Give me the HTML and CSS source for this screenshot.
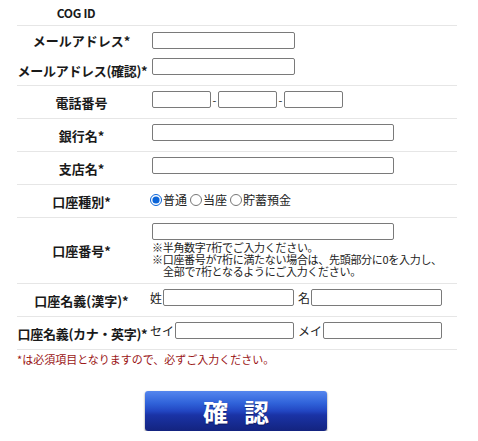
FILE: index.html
```html
<!DOCTYPE html>
<html lang="ja">
<head>
<meta charset="utf-8">
<title>登録フォーム</title>
<link rel="stylesheet" href="styles.css">
</head>
<body>
<form class="form">
  <div class="row r-cog">
    <div class="label label-id">COG ID</div>
    <div class="field"></div>
  </div>
  <div class="row r-mail">
    <div class="label">メールアドレス*</div>
    <div class="field pad"><input type="text" class="in w-mail"></div>
  </div>
  <div class="row r-mail2">
    <div class="label tight">メールアドレス(確認)*</div>
    <div class="field pad lift"><input type="text" class="in w-mail"></div>
  </div>
  <div class="row r-std">
    <div class="label">電話番号</div>
    <div class="field pad lift">
      <input type="text" class="in w-tel"><span class="dash">-</span><input type="text" class="in w-tel"><span class="dash">-</span><input type="text" class="in w-tel">
    </div>
  </div>
  <div class="row r-std">
    <div class="label">銀行名*</div>
    <div class="field pad lift"><input type="text" class="in w-long"></div>
  </div>
  <div class="row r-std">
    <div class="label">支店名*</div>
    <div class="field pad lift"><input type="text" class="in w-long"></div>
  </div>
  <div class="row r-std">
    <div class="label">口座種別*</div>
    <div class="field radios">
      <label class="opt"><input type="radio" name="kind" checked>普通</label>
      <label class="opt"><input type="radio" name="kind">当座</label>
      <label class="opt"><input type="radio" name="kind">貯蓄預金</label>
    </div>
  </div>
  <div class="row r-acct">
    <div class="label">口座番号*</div>
    <div class="field pad stack">
      <input type="text" class="in w-long">
      <div class="notes">
        <div>※半角数字7桁でご入力ください。</div>
        <div>※口座番号が7桁に満たない場合は、先頭部分に0を入力し、</div>
        <div class="indent">全部で7桁となるようにご入力ください。</div>
      </div>
    </div>
  </div>
  <div class="row r-std">
    <div class="label">口座名義(漢字)*</div>
    <div class="field lift names">
      <span class="pre">姓</span><input type="text" class="in w-kanji"><span class="pre gap">名</span><input type="text" class="in w-kanji">
    </div>
  </div>
  <div class="row r-std">
    <div class="label tight">口座名義(カナ・英字)*</div>
    <div class="field lift names">
      <span class="pre">セイ</span><input type="text" class="in w-kana"><span class="pre gap">メイ</span><input type="text" class="in w-kana">
    </div>
  </div>
  <p class="note">*は必須項目となりますので、必ずご入力ください。</p>
  <div class="actions">
    <button type="button" class="confirm"><span>確</span><span>認</span></button>
  </div>
</form>
</body>
</html>
```
FILE: styles.css
```css
html, body {
  margin: 0;
  padding: 0;
  background: #ffffff;
}
body {
  font-family: "Noto Sans CJK JP", "Liberation Sans", sans-serif;
  color: #222222;
  font-size: 12px;
}
.form {
  margin: 0 0 0 17px;
  width: 440px;
}
.row {
  display: flex;
  border-bottom: 1px solid #e6e6e6;
}
.r-cog { height: 25px; }
.r-mail { height: 29px; border-bottom: none; }
.r-mail2 { height: 30px; }
.r-std { height: 32px; }
.r-acct { height: 65px; }
.label {
  width: 133px;
  flex: none;
  box-sizing: border-box;
  padding-right: 4px;
  display: flex;
  align-items: center;
  justify-content: center;
  font-weight: bold;
  font-size: 13px;
  line-height: 15px;
  white-space: nowrap;
  color: #1a1a1a;
}
.tight {
  letter-spacing: -0.3px;
  padding-right: 2px;
}
.label-id {
  font-size: 12px;
  letter-spacing: -0.3px;
  padding-right: 15px;
}
.field {
  flex: 1;
  display: flex;
  align-items: center;
  padding-left: 0;
  font-size: 12px;
  line-height: 14px;
}
.pad { padding-left: 2px; }
.lift { padding-bottom: 5px; box-sizing: border-box; }
.r-mail2 .lift { padding-bottom: 7px; }
.in {
  box-sizing: border-box;
  height: 17px;
  margin: 0;
  padding: 0 2px;
  border: 1px solid #7a7a7a;
  border-radius: 2px;
  background: #ffffff;
  font-size: 12px;
}
.w-mail { width: 143px; }
.w-tel { width: 59px; }
.w-long { width: 242px; }
.w-kanji { width: 131px; }
.w-kana { width: 119px; }
.dash {
  width: 7px;
  text-align: center;
  font-size: 11px;
  line-height: 14px;
}
.radios { gap: 3px; padding-bottom: 2px; box-sizing: border-box; }
.opt {
  display: flex;
  align-items: center;
  white-space: nowrap;
}
.opt input {
  width: 12px;
  height: 12px;
  margin: 0 1px 0 0;
  accent-color: #0a64d8;
}
.stack {
  flex-direction: column;
  align-items: flex-start;
  justify-content: center;
  padding-bottom: 2px;
  box-sizing: border-box;
}
.notes {
  font-size: 11px;
  line-height: 12px;
  letter-spacing: -0.3px;
  margin-top: 1px;
  white-space: nowrap;
}
.indent { padding-left: 11px; }
.names .pre {
  font-size: 12px;
  line-height: 14px;
  white-space: nowrap;
}
.names .pre + .in { margin-left: 1px; }
.names .gap { margin-left: 4px; }
.note {
  margin: 0;
  padding-top: 2px;
  font-size: 11px;
  line-height: 14px;
  color: #9a1414;
  white-space: nowrap;
}
.actions {
  display: flex;
  justify-content: center;
  margin-top: 25px;
}
.confirm {
  width: 182px;
  height: 40px;
  margin: 0 0 0 -2px;
  padding: 0;
  border: none;
  border-radius: 3px;
  background: linear-gradient(#5586ee 0%, #3063da 30%, #2246c2 50%, #1a33a6 60%, #13237f 100%);
  box-shadow: 0 1px 2px rgba(0, 0, 0, 0.55);
  display: flex;
  align-items: center;
  justify-content: center;
  gap: 16px;
  color: #ffffff;
  font-family: "Noto Sans CJK JP", sans-serif;
  font-weight: bold;
  font-size: 25px;
  line-height: 28px;
  text-shadow: 0 1px 1px rgba(0, 0, 40, 0.5);
}
```
